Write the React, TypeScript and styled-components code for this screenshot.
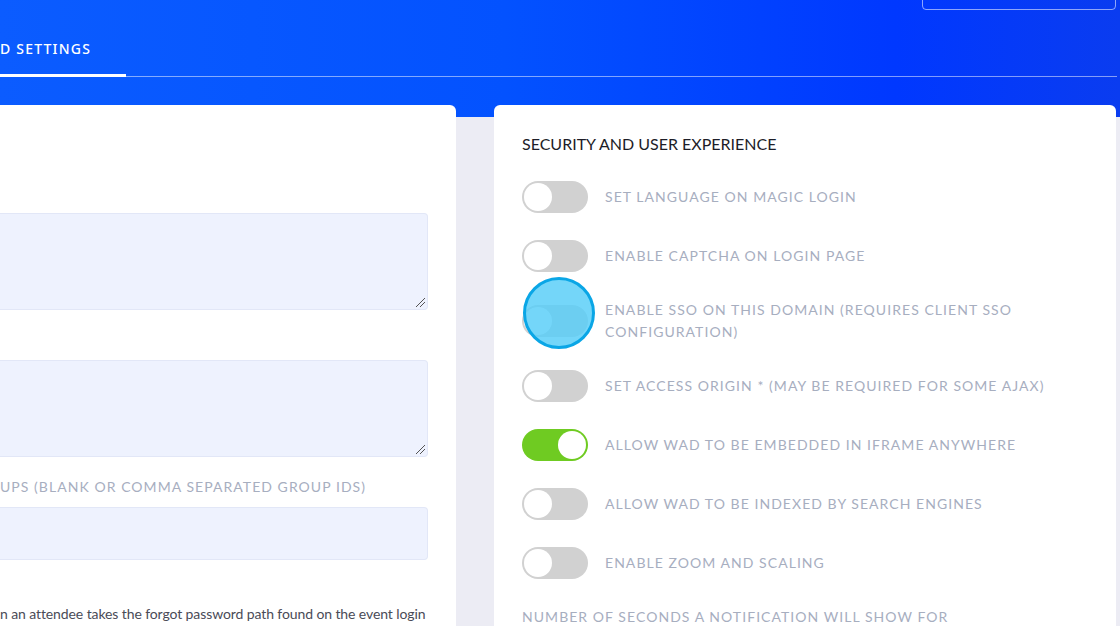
import styled, { createGlobalStyle } from 'styled-components';

const GlobalStyle = createGlobalStyle`
  html, body {
    margin: 0;
    padding: 0;
    background: #ececf4;
    overflow: hidden;
  }
  body {
    font-family: Lato, 'Noto Sans', sans-serif;
  }
`;

interface ToggleItem {
  label: string;
  on?: boolean;
  lines?: string[];
}

const toggles: ToggleItem[] = [
  { label: 'Set language on magic login' },
  { label: 'Enable captcha on login page' },
  {
    label: 'Enable SSO on this domain (requires client SSO configuration)',
    lines: ['Enable SSO on this domain (requires client SSO', 'configuration)'],
  },
  { label: 'Set access origin * (may be required for some ajax)' },
  { label: 'Allow WAD to be embedded in iframe anywhere', on: true },
  { label: 'Allow WAD to be indexed by search engines' },
  { label: 'Enable zoom and scaling' },
];

const App = () => {
  return (
    <>
      <GlobalStyle />
      <Page>
        <Header>
          <TopBar>
            <OutlineBtn />
          </TopBar>
          <TabRow>
            <Tab>D SETTINGS</Tab>
            <TabLine />
          </TabRow>
        </Header>

        <Columns>
          <LeftCard>
            <TextArea />
            <TextArea />
            <FieldLabel>UPS (BLANK OR COMMA SEPARATED GROUP IDS)</FieldLabel>
            <Input />
            <Paragraph>
              n an attendee takes the forgot password path found on the event login
            </Paragraph>
          </LeftCard>

          <RightCard>
            <CardTitle>SECURITY AND USER EXPERIENCE</CardTitle>
            <ToggleList>
              {toggles.map((t) => (
                <ToggleRow key={t.label}>
                  <Switch $on={!!t.on}>
                    <Knob $on={!!t.on} />
                  </Switch>
                  <ToggleLabel>
                    {t.lines
                      ? t.lines.map((l, i) => (
                          <span key={l}>
                            {l}
                            {i < t.lines!.length - 1 && <br />}
                          </span>
                        ))
                      : t.label}
                  </ToggleLabel>
                </ToggleRow>
              ))}
            </ToggleList>
            <FieldLabel>NUMBER OF SECONDS A NOTIFICATION WILL SHOW FOR</FieldLabel>
            <ClickMark />
          </RightCard>
        </Columns>
      </Page>
    </>
  );
};

export default App;

const Page = styled.div`
  width: 1120px;
  height: 626px;
  overflow: hidden;
  position: relative;
`;

const Header = styled.div`
  height: 117px;
  background: linear-gradient(90deg, #0b5cff 0%, #0352ff 45%, #0038ff 80%, #0a3cf0 100%);
`;

const TopBar = styled.div`
  height: 10px;
  display: flex;
  justify-content: flex-end;
  align-items: flex-end;
  padding-right: 4px;
`;

const OutlineBtn = styled.div`
  width: 194px;
  height: 40px;
  flex-shrink: 0;
  border: 1px solid rgba(255, 255, 255, 0.55);
  border-radius: 4px;
  box-sizing: border-box;
`;

const TabRow = styled.div`
  display: flex;
  align-items: flex-end;
  height: 67px;
  padding-right: 3px;
`;

const Tab = styled.div`
  width: 126px;
  height: 67px;
  box-sizing: border-box;
  padding-top: 29px;
  border-bottom: 3px solid #ffffff;
  color: #ffffff;
  font-family: 'Noto Sans', Lato, sans-serif;
  font-size: 14px;
  font-weight: 500;
  letter-spacing: 1.2px;
  line-height: 20px;
  white-space: nowrap;
`;

const TabLine = styled.div`
  flex: 1;
  height: 1px;
  background: rgba(255, 255, 255, 0.5);
`;

const Columns = styled.div`
  display: flex;
  gap: 38px;
  margin-top: -12px;
  padding-right: 4px;
`;

const LeftCard = styled.div`
  width: 456px;
  height: 560px;
  flex-shrink: 0;
  background: #ffffff;
  border-radius: 0 6px 0 0;
  box-sizing: border-box;
  padding: 108px 28px 0 0;
  display: flex;
  flex-direction: column;
`;

const TextArea = styled.div`
  height: 97px;
  background: #eef2fe;
  border: 1px solid #e2e7f7;
  border-left: none;
  border-radius: 0 4px 4px 0;
  box-sizing: border-box;
  margin-bottom: 50px;
  position: relative;

  &::after {
    content: '';
    position: absolute;
    right: 2px;
    bottom: 2px;
    width: 9px;
    height: 9px;
    background: linear-gradient(
      135deg,
      transparent 0 45%,
      #555 45% 52%,
      transparent 52% 68%,
      #555 68% 75%,
      transparent 75%
    );
  }

  & + & {
    margin-bottom: 19px;
  }
`;

const FieldLabel = styled.div`
  color: #a7aebf;
  font-size: 14px;
  letter-spacing: 1.05px;
  line-height: 22px;
  white-space: nowrap;
  text-transform: uppercase;
`;

const Input = styled.div`
  height: 53px;
  margin-top: 9px;
  background: #eef2fe;
  border: 1px solid #e2e7f7;
  border-left: none;
  border-radius: 0 4px 4px 0;
  box-sizing: border-box;
`;

const Paragraph = styled.div`
  margin-top: 43px;
  color: #4a4b57;
  font-size: 14px;
  letter-spacing: -0.1px;
  line-height: 22px;
  white-space: nowrap;
`;

const RightCard = styled.div`
  flex: 1;
  height: 560px;
  background: #ffffff;
  border-radius: 6px 6px 0 0;
  box-sizing: border-box;
  padding: 28px 28px 0 28px;
  position: relative;
`;

const CardTitle = styled.div`
  color: #1d1d28;
  font-size: 16px;
  line-height: 22px;
  margin-bottom: 26px;
`;

const ToggleList = styled.div`
  display: flex;
  flex-direction: column;
  gap: 27px;
  margin-bottom: 27px;
`;

const ToggleRow = styled.div`
  display: flex;
  align-items: center;
  gap: 17px;
  min-height: 32px;
`;

const Switch = styled.div<{ $on: boolean }>`
  width: 66px;
  height: 32px;
  flex-shrink: 0;
  border-radius: 16px;
  background: ${(p) => (p.$on ? '#6fcb22' : '#d1d1d1')};
  position: relative;
`;

const Knob = styled.div<{ $on: boolean }>`
  position: absolute;
  top: 2px;
  left: ${(p) => (p.$on ? '36px' : '2px')};
  width: 28px;
  height: 28px;
  border-radius: 50%;
  background: #ffffff;
`;

const ToggleLabel = styled.div`
  color: #a7aebf;
  font-size: 14px;
  letter-spacing: 1.05px;
  line-height: 22px;
  white-space: nowrap;
  text-transform: uppercase;
`;

const ClickMark = styled.div`
  position: absolute;
  left: 29px;
  top: 172px;
  width: 72px;
  height: 72px;
  box-sizing: border-box;
  border-radius: 50%;
  border: 3px solid #0aa6e6;
  background: rgba(86, 205, 248, 0.82);
`;
